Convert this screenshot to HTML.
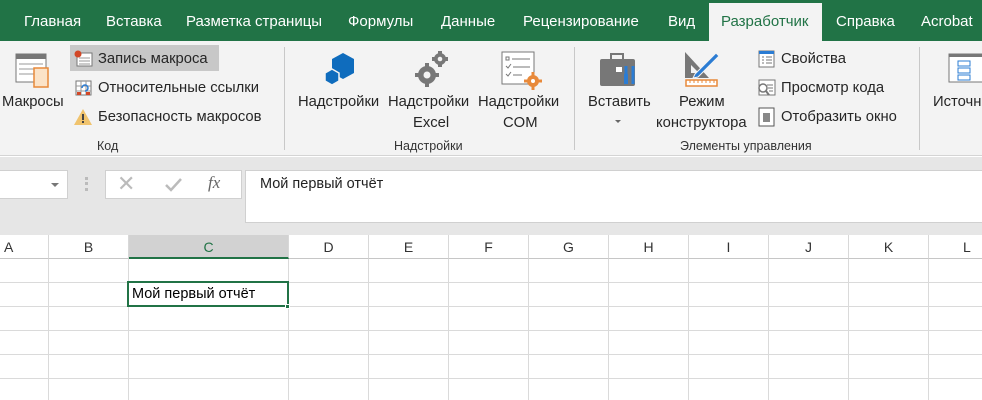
<!DOCTYPE html><html><head><meta charset="utf-8"><style>
*{margin:0;padding:0;box-sizing:border-box}
body{width:982px;height:400px;overflow:hidden;background:#fff;font-family:"Liberation Sans","DejaVu Sans",sans-serif;position:relative}
.a{position:absolute;white-space:nowrap}
.tabs{left:0;top:0;width:982px;height:41px;background:#217346}
.tab{color:#fff;font-size:15px;top:13px}
.sel{left:709px;top:3px;width:113px;height:39px;background:#f3f3f3}
.rib{left:0;top:41px;width:982px;height:115px;background:#f3f3f3;border-bottom:1px solid #d4d4d4}
.t{font-size:14.8px;color:#262626}
.g{font-size:12.5px;color:#333}
.sep{width:1px;background:#c8c8c8;top:47px;height:103px}
.fb{left:0;top:157px;width:982px;height:78px;background:#e6e6e6}
.hdr{top:235px;height:24px;background:#fff;border-bottom:1px solid #c6c6c6;font-size:14px;color:#333;text-align:center;line-height:24px;border-right:1px solid #d8d8d8}
.v{width:1px;background:#dadada;top:259px;height:141px}
.h{height:1px;background:#dadada;left:0;width:982px}
</style></head><body>
<div class="a tabs"></div>
<div class="a sel"></div>
<div class="a tab" style="left:24px">Главная</div>
<div class="a tab" style="left:106px">Вставка</div>
<div class="a tab" style="left:186px">Разметка страницы</div>
<div class="a tab" style="left:348px">Формулы</div>
<div class="a tab" style="left:441px">Данные</div>
<div class="a tab" style="left:523px">Рецензирование</div>
<div class="a tab" style="left:668px">Вид</div>
<div class="a tab" style="left:721px;color:#217346">Разработчик</div>
<div class="a tab" style="left:836px">Справка</div>
<div class="a tab" style="left:921px">Acrobat</div>
<div class="a rib"></div>
<svg class="a" style="left:15px;top:53px" width="36" height="36"><rect x="1" y="1" width="30" height="28" fill="#fff" stroke="#777"/><rect x="1" y="1" width="30" height="5" fill="#777"/><g stroke="#999"><line x1="4" y1="11" x2="28" y2="11"/><line x1="4" y1="16" x2="28" y2="16"/><line x1="4" y1="21" x2="28" y2="21"/></g><rect x="19" y="15" width="14" height="19" fill="#fbe3c8" stroke="#e8893a" stroke-width="1.5"/></svg>
<div class="a t" style="left:2px;top:94px">Макросы</div>
<div class="a" style="left:70px;top:45px;width:149px;height:26px;background:#c8c8c8"></div>
<svg class="a" style="left:74px;top:50px" width="20" height="18"><rect x="3" y="3" width="15" height="13" fill="#fff" stroke="#777"/><g stroke="#999"><line x1="5" y1="8" x2="16" y2="8"/><line x1="5" y1="11" x2="16" y2="11"/><line x1="5" y1="14" x2="16" y2="14"/></g><circle cx="4" cy="4" r="3.5" fill="#d24726"/></svg>
<div class="a t" style="left:98px;top:51px">Запись макроса</div>
<svg class="a" style="left:74px;top:79px" width="20" height="18"><rect x="2" y="2" width="15" height="14" fill="#fff" stroke="#777"/><path d="M7 2V16M12 2V16M2 7H17M2 12H17" stroke="#999"/><rect x="3" y="13" width="4" height="3" fill="#d24726"/><rect x="12" y="13" width="4" height="3" fill="#d24726"/><path d="M8 9a3 3 0 1 1 3 3" stroke="#2b7cd3" fill="none" stroke-width="1.5"/></svg>
<div class="a t" style="left:98px;top:80px">Относительные ссылки</div>
<svg class="a" style="left:74px;top:108px" width="20" height="18"><path d="M9 1L18 17H0Z" fill="#f0c36d"/><rect x="8" y="6" width="2" height="6" fill="#444"/><rect x="8" y="13" width="2" height="2" fill="#444"/></svg>
<div class="a t" style="left:98px;top:109px">Безопасность макросов</div>
<div class="a g" style="left:97px;top:139px">Код</div>
<div class="a sep" style="left:284px"></div>
<svg class="a" style="left:322px;top:52px" width="36" height="34"><path d="M21 1l11 6v14l-11 6-11-6V7z" fill="#0f6cbd"/><path d="M10 17l7 4v8l-7 4-7-4v-8z" fill="#0f6cbd" stroke="#f3f3f3" stroke-width="1.5"/></svg>
<div class="a t" style="left:298px;top:94px">Надстройки</div>
<svg class="a" style="left:412px;top:50px" width="36" height="40"><g fill="#777"><circle cx="15" cy="25" r="9"/><circle cx="28" cy="9" r="6"/></g><g stroke="#777" stroke-width="4"><line x1="15" y1="13" x2="15" y2="37"/><line x1="3" y1="25" x2="27" y2="25"/><line x1="28" y1="1" x2="28" y2="17"/><line x1="20" y1="9" x2="36" y2="9"/></g><circle cx="15" cy="25" r="3.5" fill="#f3f3f3"/><circle cx="28" cy="9" r="2.3" fill="#f3f3f3"/></svg>
<div class="a t" style="left:388px;top:94px">Надстройки</div>
<div class="a t" style="left:413px;top:115px">Excel</div>
<svg class="a" style="left:500px;top:50px" width="42" height="42"><rect x="2" y="2" width="32" height="32" fill="#fff" stroke="#777"/><g stroke="#777"><rect x="6" y="7" width="3" height="3" fill="none"/><line x1="12" y1="9" x2="30" y2="9"/><path d="M6 16l2 2 3-4M6 24l2 2 3-4" fill="none"/><line x1="13" y1="17" x2="30" y2="17"/><line x1="13" y1="25" x2="22" y2="25"/></g><circle cx="33" cy="31" r="6" fill="#e8893a"/><g stroke="#e8893a" stroke-width="3"><line x1="33" y1="22" x2="33" y2="40"/><line x1="24" y1="31" x2="42" y2="31"/></g><circle cx="33" cy="31" r="2" fill="#fff"/></svg>
<div class="a t" style="left:478px;top:94px">Надстройки</div>
<div class="a t" style="left:503px;top:115px">COM</div>
<div class="a g" style="left:394px;top:139px">Надстройки</div>
<div class="a sep" style="left:574px"></div>
<svg class="a" style="left:600px;top:52px" width="40" height="36"><rect x="11" y="2" width="12" height="6" fill="none" stroke="#777" stroke-width="2"/><rect x="0" y="7" width="35" height="27" rx="2" fill="#777"/><rect x="16" y="15" width="6" height="5" fill="#fff"/><path d="M26 14v18M33 14v18" stroke="#2b7cd3" stroke-width="3"/><rect x="24" y="22" width="4" height="10" fill="#2b7cd3"/></svg>
<div class="a t" style="left:588px;top:94px">Вставить</div>
<div class="a" style="left:615px;top:120px;width:0;height:0;border-left:3px solid transparent;border-right:3px solid transparent;border-top:3px solid #666"></div>
<svg class="a" style="left:683px;top:50px" width="40" height="38"><path d="M2 2V28H26Z" fill="#777"/><path d="M8 15V23H16Z" fill="#f3f3f3"/><path d="M12 24L33 3l3 3L15 27l-5 1z" fill="#2b7cd3" stroke="#f3f3f3"/><rect x="3" y="30" width="31" height="6" fill="#fff" stroke="#e8893a" stroke-width="1.5"/><path d="M7 30v3M11 30v3M15 30v3M19 30v3M23 30v3M27 30v3M31 30v3" stroke="#e8893a"/></svg>
<div class="a t" style="left:679px;top:94px">Режим</div>
<div class="a t" style="left:656px;top:115px">конструктора</div>
<svg class="a" style="left:758px;top:50px" width="18" height="18"><rect x="1" y="1" width="15" height="16" fill="#fff" stroke="#777"/><rect x="1" y="1" width="15" height="3" fill="#2b7cd3"/><path d="M4 7h2M8 7h6M4 10h2M8 10h6M4 13h2M8 13h6" stroke="#777"/></svg>
<div class="a t" style="left:781px;top:51px">Свойства</div>
<svg class="a" style="left:757px;top:79px" width="20" height="18"><rect x="2" y="1" width="16" height="15" fill="#fff" stroke="#777"/><path d="M10 6h6M11 9h5M12 12h4" stroke="#777"/><circle cx="6" cy="9" r="4" fill="none" stroke="#777" stroke-width="1.5"/><line x1="9" y1="12" x2="12" y2="16" stroke="#777" stroke-width="2"/></svg>
<div class="a t" style="left:781px;top:80px">Просмотр кода</div>
<svg class="a" style="left:758px;top:107px" width="18" height="20"><rect x="1" y="1" width="15" height="18" fill="#fff" stroke="#555"/><rect x="5" y="6" width="7" height="9" fill="#888"/></svg>
<div class="a t" style="left:781px;top:109px">Отобразить окно</div>
<div class="a g" style="left:680px;top:139px">Элементы управления</div>
<div class="a sep" style="left:919px"></div>
<svg class="a" style="left:948px;top:53px" width="34" height="32"><rect x="1" y="1" width="40" height="28" fill="#fff" stroke="#777"/><rect x="1" y="1" width="40" height="3" fill="#777"/><g fill="none" stroke="#2b7cd3"><rect x="10" y="8" width="12" height="5"/><rect x="10" y="15" width="12" height="5"/><rect x="10" y="22" width="12" height="5"/></g></svg>
<div class="a t" style="left:933px;top:94px">Источник</div>
<div class="a fb"></div>
<div class="a" style="left:0;top:170px;width:68px;height:29px;background:#fff;border:1px solid #d0d0d0;border-left:none"></div>
<div class="a" style="left:51px;top:183px;border-left:4px solid transparent;border-right:4px solid transparent;border-top:4px solid #777"></div>
<div class="a" style="left:85px;top:177px;width:3px;height:14px;border-left:3px dotted #bbb"></div>
<div class="a" style="left:105px;top:170px;width:137px;height:29px;background:#fff;border:1px solid #d0d0d0"></div>
<div class="a" style="left:117px;top:171px;font-size:22px;color:#bbb">✕</div>
<svg class="a" style="left:164px;top:176px" width="20" height="18"><path d="M2 9l5 5 10-11" stroke="#bbb" stroke-width="2.5" fill="none"/></svg>
<div class="a" style="left:208px;top:173px;font-family:'Liberation Serif',serif;font-style:italic;font-size:17px;color:#666">fx</div>
<div class="a" style="left:245px;top:170px;width:737px;height:53px;background:#fff;border:1px solid #d0d0d0;border-right:none"></div>
<div class="a t" style="left:260px;top:176px;font-size:14.5px;color:#222">Мой первый отчёт</div>
<div class="a hdr" style="left:0;width:49px;text-align:left;padding-left:4px">A</div>
<div class="a hdr" style="left:49px;width:80px">B</div>
<div class="a hdr" style="left:129px;width:160px;background:#d2d2d2;border-bottom:2px solid #217346;color:#217346">C</div>
<div class="a hdr" style="left:289px;width:80px">D</div>
<div class="a hdr" style="left:369px;width:80px">E</div>
<div class="a hdr" style="left:449px;width:80px">F</div>
<div class="a hdr" style="left:529px;width:80px">G</div>
<div class="a hdr" style="left:609px;width:80px">H</div>
<div class="a hdr" style="left:689px;width:80px">I</div>
<div class="a hdr" style="left:769px;width:80px">J</div>
<div class="a hdr" style="left:849px;width:80px">K</div>
<div class="a hdr" style="left:929px;width:80px;text-align:left;padding-left:34px">L</div>
<div class="a v" style="left:48px"></div><div class="a v" style="left:128px"></div><div class="a v" style="left:288px"></div><div class="a v" style="left:368px"></div><div class="a v" style="left:448px"></div><div class="a v" style="left:528px"></div><div class="a v" style="left:608px"></div><div class="a v" style="left:688px"></div><div class="a v" style="left:768px"></div><div class="a v" style="left:848px"></div><div class="a v" style="left:928px"></div>
<div class="a h" style="top:282px"></div><div class="a h" style="top:306px"></div><div class="a h" style="top:330px"></div><div class="a h" style="top:354px"></div><div class="a h" style="top:378px"></div>
<div class="a" style="left:127px;top:281px;width:162px;height:26px;border:2px solid #217346"></div>
<div class="a" style="left:285px;top:304px;width:5px;height:5px;background:#217346;border:1px solid #fff"></div>
<div class="a" style="left:132px;top:286px;font-size:14.5px;color:#000">Мой первый отчёт</div>
</body></html>
